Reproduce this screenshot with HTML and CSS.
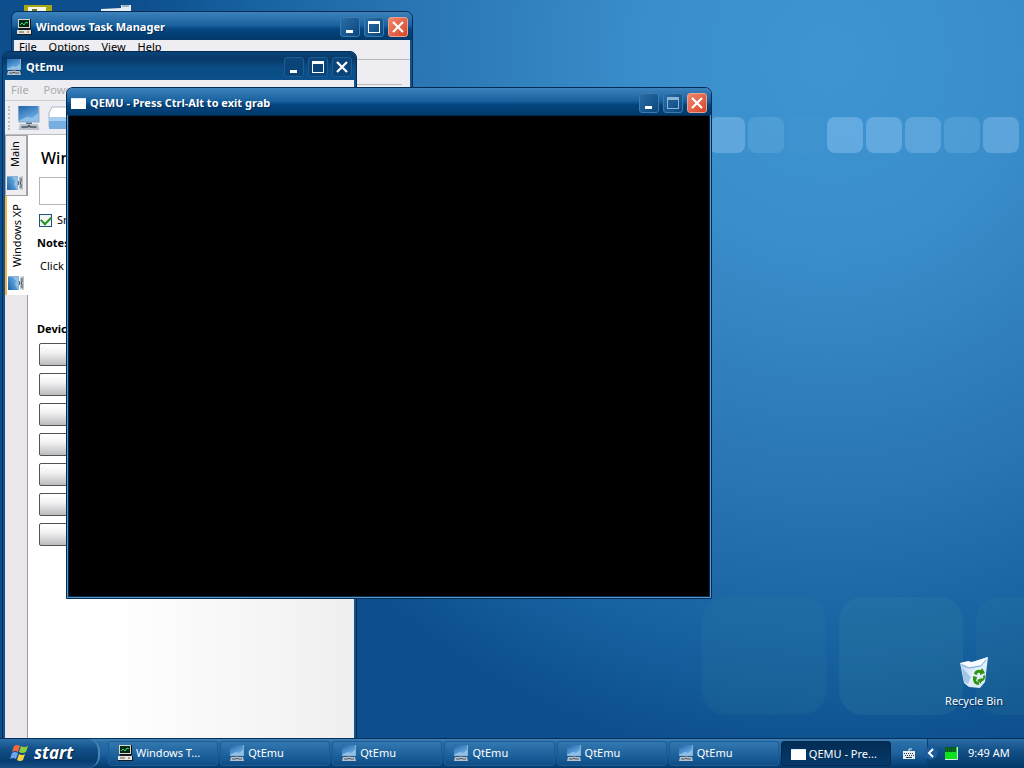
FILE: index.html
```html
<!DOCTYPE html>
<html lang="en">
<head>
<meta charset="utf-8">
<title>Desktop</title>
<link rel="stylesheet" href="styles.css">
</head>
<body>
<svg class="defs" aria-hidden="true">
  <defs>
    <linearGradient id="sky" x1="0" y1="0" x2="0.6" y2="1"><stop offset="0" stop-color="#1f62a8"/><stop offset="1" stop-color="#6fb2e6"/></linearGradient>
    <linearGradient id="bin" x1="0" y1="0" x2="1" y2="1"><stop offset="0" stop-color="#a9cdf0"/><stop offset="0.5" stop-color="#e2f0fb"/><stop offset="1" stop-color="#cfe3f3"/></linearGradient>
  </defs>
  <symbol id="i-qt" viewBox="0 0 16 16">
    <rect x="1" y="0" width="14" height="11" fill="#8fb0cf"/><rect x="1" y="0" width="13" height="10" fill="url(#sky)"/>
    <path d="M1 10l6-3 3 1 4-3v5z" fill="#8dc1ea"/><path d="M6 11h4v2H6z" fill="#5b6f82"/>
    <path d="M2 12h12l1 4H1z" fill="#b9c2ca"/><path d="M3 14h4l1-1 1 1h4" stroke="#455460" fill="none"/>
  </symbol>
  <symbol id="i-task" viewBox="0 0 16 16">
    <path d="M3 0h12v10H3z" fill="#111"/><path d="M2 0h12v9H2z" fill="#dcd8c8"/><path d="M3 1h10v7H3z" fill="#052a18"/>
    <path d="M4 6l2-2 2 2 2-3 2 1" stroke="#39d977" fill="none"/><path d="M1 11h14v4H1z" fill="#e8e5dc"/><path d="M1 15h15v1H1zM15 11h1v5h-1zM3 9h11v2H3z" fill="#15191d"/><path d="M3 13h5M11 13h2" stroke="#555"/>
  </symbol>
  <symbol id="i-win" viewBox="0 0 16 16"><path d="M1 3h15v11H1z" fill="#fff"/><path d="M1 3h15v1H1z" fill="#dcebf8"/></symbol>
  <symbol id="i-min" viewBox="0 0 12 12"><path d="M2 9h7v3H2z" fill="#fff"/></symbol>
  <symbol id="i-max" viewBox="0 0 12 12"><path d="M0 0h12v12H0zM1 3v8h10V3z" fill="currentColor" fill-rule="evenodd"/></symbol>
  <symbol id="i-close" viewBox="0 0 12 12"><path d="M1 1l10 10M11 1L1 11" stroke="#fff" stroke-width="2.200"/></symbol>
</svg>

<main class="desktop">
  <svg class="wallpaper small-tiles" viewBox="0 0 320 50" aria-hidden="true">
    <g fill="#8cc4f0"><rect x="5" y="7" width="36" height="36" rx="8" opacity=".45"/><rect x="44" y="7" width="36" height="36" rx="8" opacity=".24"/><rect x="84" y="7" width="36" height="36" rx="8" opacity=".05"/><rect x="123" y="7" width="36" height="36" rx="8" opacity=".48"/><rect x="162" y="7" width="36" height="36" rx="8" opacity=".47"/><rect x="201" y="7" width="36" height="36" rx="8" opacity=".4"/><rect x="240" y="7" width="36" height="36" rx="8" opacity=".26"/><rect x="279" y="7" width="36" height="36" rx="8" opacity=".42"/></g>
  </svg>
  <svg class="wallpaper large-tiles" viewBox="0 0 324 130" aria-hidden="true">
    <g fill="#3d8c9c"><rect x="2" y="2" width="124" height="118" rx="24" opacity=".13"/><rect x="139" y="2" width="124" height="118" rx="24" opacity=".2"/><rect x="276" y="2" width="124" height="118" rx="24" opacity=".13"/></g>
  </svg>
  <svg class="shortcuts" viewBox="0 0 110 12" aria-hidden="true"><path d="M0 5h28v7H0z" fill="#a8a712"/><path d="M4 7h18v5H4z" fill="#f7f9e8"/><path d="M8 9h5v3H8z" fill="#6d7530"/><path d="M77 9l20-1V5h10v7H77z" fill="#e5edf4"/><path d="M98 6h7" stroke="#678"/></svg>

  <a class="recycle" href="#">
    <svg viewBox="0 0 32 32" aria-hidden="true"><path d="M2 6l12-1L30 0l-3 25-5 6-11-1-5-4z" fill="url(#bin)"/><path d="M2 6l9 4 12-2 7-8-12 4-4 1-4-1z" fill="#f7fcff"/><path d="M4 8l7 3 12-2 5-6" stroke="#7baadd" fill="none"/><path d="M4 11l9 9-3 7-4-2z" fill="#87b2e2" opacity=".65"/><path d="M16 17q1-5 7-4l1-2 3 5-5 2 0-2q-3-1-3 2zM27 18q1 5-4 7v2l-4-4 5-2v1q2-1 1-3zM15 19l4 1-1 4 3 1v3q-7 0-6-9z" fill="#31940e"/></svg>
    <span>Recycle Bin</span>
  </a>

  <section class="window task-manager">
    <header class="titlebar"><svg class="icon"><use href="#i-task"/></svg><h2>Windows Task Manager</h2>
      <div class="controls"><button aria-label="Minimize"><svg><use href="#i-min"/></svg></button><button aria-label="Maximize"><svg><use href="#i-max"/></svg></button><button class="close" aria-label="Close"><svg><use href="#i-close"/></svg></button></div>
    </header>
    <div class="pane"><nav class="menu"><button>File</button><button>Options</button><button>View</button><button>Help</button></nav><div class="tabs-area"></div></div>
  </section>

  <section class="window qtemu">
    <header class="titlebar"><svg class="icon"><use href="#i-qt"/></svg><h2>QtEmu</h2>
      <div class="controls"><button aria-label="Minimize"><svg><use href="#i-min"/></svg></button><button aria-label="Maximize"><svg><use href="#i-max"/></svg></button><button aria-label="Close"><svg><use href="#i-close"/></svg></button></div>
    </header>
    <div class="pane">
      <nav class="menu"><button disabled>File</button><button disabled>Power</button></nav>
      <div class="toolbar"><span class="grip"></span><button aria-label="New machine"><svg><use href="#i-qt"/></svg></button><button aria-label="Open machine"><svg viewBox="0 0 24 24"><path d="M4 1h18v20H1V7z" fill="#fff" stroke="#a8b7c7"/><path d="M1 11h22v12H1z" fill="#76aee1"/><path d="M1 11h22v4H1z" fill="#a6cef0"/></svg></button></div>
      <div class="machine">
        <div class="side-tabs"><button>Main<svg><use href="#i-qt"/></svg></button><button class="selected">Windows XP<svg><use href="#i-qt"/></svg></button></div>
        <div class="details">
          <h1>Windows XP</h1>
          <div class="display"></div>
          <label><input type="checkbox" checked><span>Snapshot</span></label>
          <h3>Notes</h3>
          <p>Click here</p>
          <h3>Devices</h3>
          <div class="devices"><button aria-label="Device 1"></button><button aria-label="Device 2"></button><button aria-label="Device 3"></button><button aria-label="Device 4"></button><button aria-label="Device 5"></button><button aria-label="Device 6"></button><button aria-label="Device 7"></button></div>
        </div>
      </div>
    </div>
  </section>

  <section class="window qemu">
    <header class="titlebar"><svg class="icon"><use href="#i-win"/></svg><h2>QEMU - Press Ctrl-Alt to exit grab</h2>
      <div class="controls"><button aria-label="Minimize"><svg><use href="#i-min"/></svg></button><button class="dim" aria-label="Maximize"><svg><use href="#i-max"/></svg></button><button class="close" aria-label="Close"><svg><use href="#i-close"/></svg></button></div>
    </header>
    <div class="screen"></div>
  </section>
</main>

<footer class="taskbar">
  <button class="start"><svg viewBox="0 0 20 20" aria-hidden="true"><path d="M4 3q3-2 6 0L8 9q-3-2-6 0z" fill="#f2663c"/><path d="M11 3q3 2 7 0l-2 6q-4 2-7 0z" fill="#8dcc3f"/><path d="M2 10q3-2 6 0l-2 6q-3-2-6 0z" fill="#6aa5ee"/><path d="M9 11q3 2 6 0l-2 6q-3 2-6 0z" fill="#fbd043"/></svg>start</button>
  <nav class="tasks">
    <button><svg><use href="#i-task"/></svg><span>Windows T...</span></button>
    <button><svg><use href="#i-qt"/></svg><span>QtEmu</span></button>
    <button><svg><use href="#i-qt"/></svg><span>QtEmu</span></button>
    <button><svg><use href="#i-qt"/></svg><span>QtEmu</span></button>
    <button><svg><use href="#i-qt"/></svg><span>QtEmu</span></button>
    <button><svg><use href="#i-qt"/></svg><span>QtEmu</span></button>
    <button class="active"><svg><use href="#i-win"/></svg><span>QEMU - Pre...</span></button>
  </nav>
  <button class="keyboard" aria-label="Keyboard"><svg viewBox="0 0 14 12"><path d="M1 3h12v8H1z" fill="#e9edf0"/><path d="M2 5.500h10M3 7.500h10" stroke="#24394c" stroke-dasharray="1 1"/><path d="M4 9.500h6" stroke="#24394c"/><path d="M7 3V1h3" stroke="#dfe8ee" fill="none"/></svg></button>
  <div class="tray">
    <button class="expand" aria-label="Show hidden icons"><svg viewBox="0 0 14 14"><circle cx="7" cy="7" r="6.500" fill="#1c5c9c"/><path d="M9 3L5 7l4 4" stroke="#fff" stroke-width="2" fill="none"/></svg></button>
    <svg class="meter" viewBox="0 0 14 14"><path d="M1 1h12v12H1z" fill="#0ce11f"/><path d="M1 1h11v5H1z" fill="#075b1c"/><path d="M2 3h9M2 5h9" stroke="#0f8a2b" stroke-dasharray="1 1"/><path d="M1 13.500h12.500V1" stroke="#d5e9de" fill="none"/></svg>
    <time>9:49 AM</time>
  </div>
</footer>
</body>
</html>
```
FILE: styles.css
```css
* { box-sizing: border-box; }
body {
  margin: 0;
  height: 100vh;
  display: grid;
  grid-template-rows: 1fr 30px;
  overflow: hidden;
  font: 11px/14px "Noto Sans", "Open Sans", sans-serif;
  color: #000;
}
button { font: inherit; color: inherit; border: 0; padding: 0; background: none; }
svg { display: block; flex: none; }
h1, h2, h3, p { margin: 0; }
.defs { position: absolute; width: 0; height: 0; }

.desktop {
  position: relative;
  overflow: hidden;
  background: radial-gradient(ellipse 68% 96% at 81% 8%, #3e95d3 0%, #398dca 28%, #2a75b3 60%, #1761a0 84%, #0c4f8c 100%);
}
.wallpaper, .shortcuts, .recycle, .window { position: absolute; }
.small-tiles { width: 320px; right: 0; top: 110px; }
.large-tiles { width: 324px; right: 0; top: 595px; }
.shortcuts { left: 24px; top: 0; width: 110px; }
.recycle {
  right: 14px;
  bottom: 30px;
  width: 72px;
  display: flex;
  flex-direction: column;
  align-items: center;
  gap: 5px;
  color: #fff;
  text-decoration: none;
  white-space: nowrap;
  text-shadow: 1px 1px 1px #002a55;
}
.recycle svg { width: 32px; height: 32px; }

.window {
  display: flex;
  flex-direction: column;
  overflow: hidden;
  padding: 0 2px 2px;
  border: 1px solid #042c54;
  border-radius: 7px 7px 0 0;
  background: #145389;
}
.task-manager { left: 11px; top: 11px; width: 402px; height: 160px; }
.qtemu { left: 2px; top: 51px; width: 355px; bottom: -4px; padding: 0 2px; }
.qemu { left: 66px; top: 87px; width: 646px; height: 512px; padding: 0 1px 1px; background: #5b9bc9; }
.titlebar {
  flex: none;
  height: 28px;
  margin: 0 -2px;
  padding: 2px 4px 0;
  display: flex;
  align-items: center;
  gap: 4px;
  color: #fff;
  background: linear-gradient(#3c82bd 0, #2a71ad 25%, #19619e 48%, #04457e 62%, #02396b 100%);
}
.qemu .titlebar { height: 27px; padding-right: 5px; }
.qtemu .titlebar { background: linear-gradient(#0b4378, #07396a 25%, #0a4c84 55%, #0b508b); padding-left: 3px; }
.titlebar h2 { flex: 1; font-size: 11px; line-height: 16px; text-shadow: 1px 1px #02305c; }
.icon { width: 16px; height: 16px; }
.controls { display: flex; gap: 4px; }
.controls button {
  width: 20px;
  height: 20px;
  display: grid;
  place-items: center;
  border: 1px solid #397cb0;
  border-radius: 3px;
  background: linear-gradient(135deg, #2b6ea8, #0b467c);
}
.qtemu .controls button { border-color: #1c5d94; background: #0a4479; }
.controls .close { border-color: #eda28d; background: linear-gradient(135deg, #ef876b, #d8452b); }
.controls .dim { color: #8db5d6; }
.controls svg { width: 12px; height: 12px; }

.pane { flex: 1; display: flex; flex-direction: column; min-height: 0; background: #eeedf1; }
.menu { height: 20px; display: flex; gap: 12px; padding: 0 5px; }
.menu button { align-self: flex-start; }
.task-manager .menu { border-bottom: 1px solid #b9b8bd; }
.tabs-area { margin: 24px 8px 0; border-top: 1px solid #b9b8bd; }
.qtemu .menu { height: 21px; gap: 15px; padding: 3px 6px 0; color: #aaa9ad; border-bottom: 1px solid #d0ced2; }
.toolbar { height: 34px; display: flex; align-items: center; gap: 7px; padding-left: 3px; border-bottom: 1px solid #bcbbc0; }
.grip { width: 2px; height: 24px; border-left: 2px dotted #c2c1c6; }
.toolbar svg { width: 24px; height: 24px; }
.machine { flex: 1; display: flex; min-height: 0; }
.side-tabs { width: 23px; border-right: 1px solid #9c9ba0; display: flex; flex-direction: column; background: #e9e7ea; }
.side-tabs button {
  writing-mode: vertical-rl;
  rotate: 180deg;
  width: 22px;
  height: 61px;
  display: flex;
  flex-direction: row-reverse;
  align-items: center;
  justify-content: flex-start;
  gap: 8px;
  padding: 4px 1px 4px 3px;
  border: 1px solid #a4a4a8;
  background: #efedf0;
}
.side-tabs .selected { width: 23px; height: 99px; padding-bottom: 5px; background: #fff; border: 0; border-right: 2px solid #f6b33d; }
.side-tabs button { justify-content: flex-end; }
.side-tabs svg { width: 16px; height: 16px; rotate: 90deg; }
.details {
  flex: 1;
  min-width: 0;
  padding: 13px 9px;
  background: linear-gradient(90deg, #fff 25%, #f9f9f9 55%, #efeff0);
  white-space: nowrap;
}
.details h1 { font-size: 16px; line-height: 20px; font-weight: 500; padding-left: 4px; }
.display { height: 28px; margin: 9px 2px 0; border: 1px solid #b5b5b8; background: #fff; }
.details label { display: flex; align-items: center; gap: 5px; height: 16px; margin: 7px 2px 8px; }
.details input {
  appearance: none;
  width: 13px;
  height: 13px;
  margin: 0;
  border: 1px solid #1c5180;
  background: #f5f6f3;
  display: grid;
  place-items: center;
}
.details input:checked::before { content: ""; width: 8px; height: 5px; border: solid #219321; border-width: 0 0 2px 2px; rotate: -45deg; margin-bottom: 2px; }
.details h3 { font-size: 11px; line-height: 14px; }
.details p { padding: 9px 3px 49px; }
.devices { display: grid; gap: 7px; margin: 7px 2px; }
.devices button { height: 23px; border: 1px solid #515255; border-radius: 2px; background: linear-gradient(#fff 10%, #f2f2f3 40%, #bbbcbe); }
.screen { flex: 1; background: #000; border: 1px solid #02294d; }

.taskbar {
  display: flex;
  align-items: stretch;
  color: #fff;
  border-top: 1px solid #02305a;
  background: linear-gradient(#4383b6 0, #2a6ea8 10%, #20649f 45%, #0c4e88 75%, #033a6c 100%);
}
.start {
  width: 100px;
  display: flex;
  align-items: center;
  gap: 4px;
  padding: 0 0 2px 10px;
  font: italic 700 17px/20px "Open Sans", "Noto Sans", sans-serif;
  text-shadow: 1px 1px 1px #01254a;
  border-right: 2px solid #4584b3;
  border-radius: 0 12px 12px 0;
  background: linear-gradient(#2c6fa8, #124f87 35%, #073d70 75%, #1a5186);
}
.start svg { width: 20px; height: 20px; }
.tasks { flex: 1; display: flex; gap: 2px; padding: 2px 0 2px 8px; }
.tasks button {
  flex: 1 1 0;
  min-width: 0;
  max-width: 120px;
  display: flex;
  align-items: center;
  gap: 3px;
  padding: 0 0 2px 8px;
  border-radius: 3px;
  border: 1px solid #1b5c96;
  background: linear-gradient(#3478b0, #1c609b 60%, #0d4d86);
  white-space: nowrap;
}
.tasks .active { padding-bottom: 0; border-color: #01284d; background: linear-gradient(#032c55, #063a69); }
.tasks svg { width: 16px; height: 16px; }
.keyboard { width: 36px; display: grid; place-items: center; }
.keyboard svg { width: 14px; height: 12px; }
.tray { width: 97px; display: flex; align-items: center; padding-bottom: 2px; border-left: 1px solid #0a4173; background: linear-gradient(#2b6da6, #124f87 40%, #04396a); }
.expand { margin-left: -4px; }
.expand svg, .meter { width: 14px; height: 14px; }
.meter { margin-left: 6px; }
.tray time { margin-left: 10px; white-space: nowrap; }
```
